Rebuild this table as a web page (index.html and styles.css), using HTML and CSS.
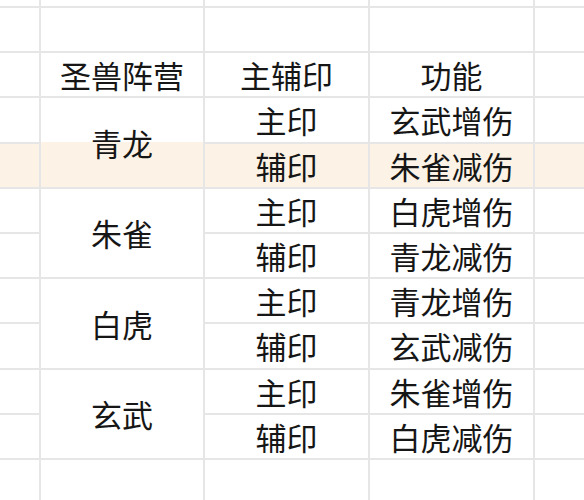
FILE: index.html
```html
<!DOCTYPE html>
<html lang="zh-CN">
<head>
<meta charset="utf-8">
<link rel="stylesheet" href="styles.css">
</head>
<body>
<div class="sheet">
  <div class="c"></div><div class="c"></div><div class="c"></div><div class="c"></div><div class="c"></div>
  <div class="c"></div><div class="c"></div><div class="c"></div><div class="c"></div><div class="c"></div>

  <div class="c"></div><div class="c">圣兽阵营</div><div class="c">主辅印</div><div class="c">功能</div><div class="c"></div>

  <div class="c"></div><div class="c m hl-lower">青龙</div><div class="c">主印</div><div class="c">玄武增伤</div><div class="c"></div>
  <div class="c hl"></div><div class="c hl">辅印</div><div class="c hl">朱雀减伤</div><div class="c hl"></div>

  <div class="c"></div><div class="c m">朱雀</div><div class="c">主印</div><div class="c">白虎增伤</div><div class="c"></div>
  <div class="c"></div><div class="c">辅印</div><div class="c">青龙减伤</div><div class="c"></div>

  <div class="c"></div><div class="c m">白虎</div><div class="c">主印</div><div class="c">青龙增伤</div><div class="c"></div>
  <div class="c"></div><div class="c">辅印</div><div class="c">玄武减伤</div><div class="c"></div>

  <div class="c"></div><div class="c m">玄武</div><div class="c">主印</div><div class="c">朱雀增伤</div><div class="c"></div>
  <div class="c"></div><div class="c">辅印</div><div class="c">白虎减伤</div><div class="c"></div>

  <div class="c"></div><div class="c"></div><div class="c"></div><div class="c"></div><div class="c"></div>
</div>
</body>
</html>
```

FILE: styles.css
```css
html, body {
  margin: 0;
  padding: 0;
  background: #ffffff;
}

body {
  width: 584px;
  height: 500px;
  overflow: hidden;
  font-family: "Noto Sans CJK SC", "Noto Sans", sans-serif;
}

.sheet {
  display: grid;
  grid-template-columns: 41px 164px 165px 165px 60px;
  grid-template-rows: 8px repeat(10, 45.2px) 60px;
  color: #161616;
  font-size: 31px;
}

.c {
  box-sizing: border-box;
  border-right: 2px solid #e6e6e6;
  border-bottom: 2px solid #e6e6e6;
  display: flex;
  align-items: center;
  justify-content: center;
  line-height: 1;
  white-space: nowrap;
}

.m {
  grid-row: span 2;
}

.hl {
  background: #fcf3e6;
}

.hl-lower {
  background: linear-gradient(to bottom, transparent 50%, #fcf3e6 50%);
}
```
